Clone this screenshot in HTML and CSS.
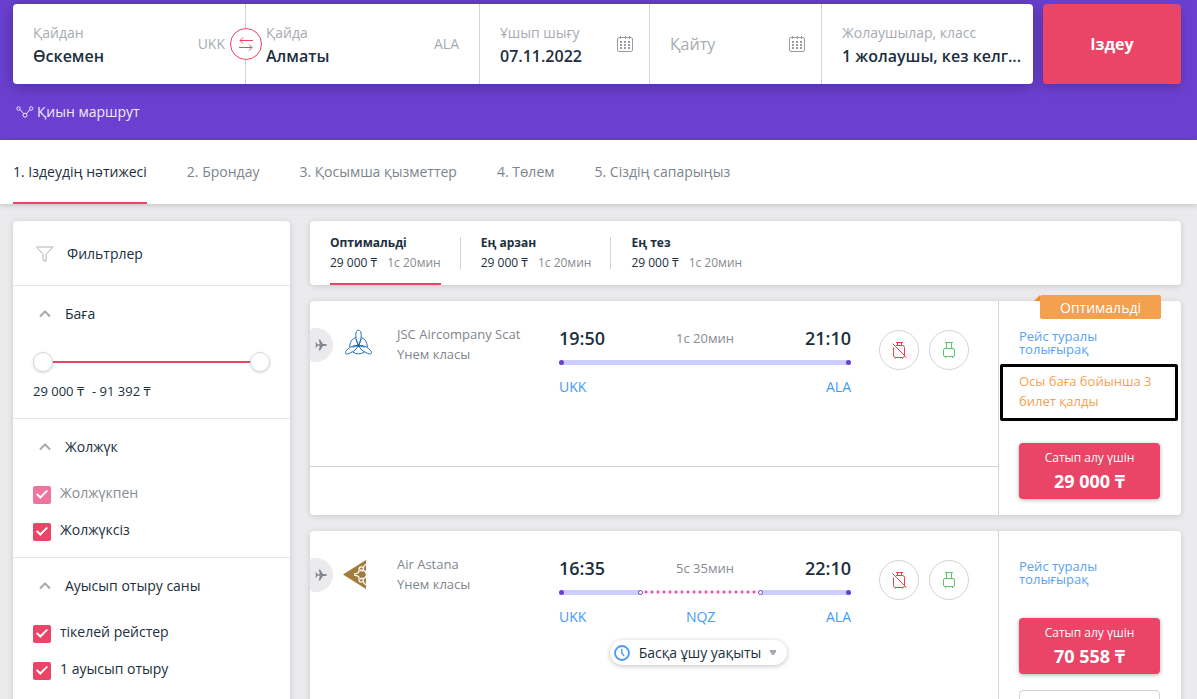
FILE: index.html
```html
<!DOCTYPE html>
<html lang="kk">
<head>
<meta charset="utf-8">
<meta name="viewport" content="width=device-width, initial-scale=1">
<title>Іздеудің нәтижесі</title>
<link rel="stylesheet" href="styles.css">
</head>
<body>
<svg class="sprite" aria-hidden="true">
  <symbol id="calendar" viewBox="0 0 16 16">
    <path d="M2 1.500h12q1.500 0 1.500 1.500v11q0 1.500-1.500 1.500h-12q-1.500 0-1.500-1.500v-11q0-1.500 1.500-1.500zM3.500 0v3M8.500 0v3M12.500 0v3" fill="none" stroke="currentColor"/>
    <path d="M3 5h2v2H3zM7 5h2v2H7zM11 5h2v2h-2zM3 8h2v2H3zM7 8h2v2H7zM11 8h2v2h-2zM3 11h2v2H3zM7 11h2v2H7zM11 11h2v2h-2z" fill="currentColor"/>
  </symbol>
  <symbol id="chevron" viewBox="0 0 12 8"><path d="M1 6.500l5-5 5 5" fill="none" stroke="currentColor" stroke-width="2"/></symbol>
  <symbol id="plane" viewBox="0 0 12 12"><path d="M0.300 3.500h1l1.200 1.700h2.300L3.800 0.500h1.300l2.900 4.600h2.500q1.300 0 1.300.9t-1.300.9H8L5.100 11.500H3.800L4.800 6.800H2.500L1.300 8.500h-1L1 6z" fill="currentColor"/></symbol>
  <symbol id="no-bag" viewBox="0 0 16 18">
    <path d="M5 1.500h7M6.500 2v3M10.500 2v3M5 4.500h6.500q2 0 2 2v8q0 2-2 2H4.500q-2 0-2-2V6.500M4.500 16.500v1M11.500 16.500v1M1.500 2.500l14 14" fill="none" stroke="currentColor"/>
  </symbol>
  <symbol id="bag" viewBox="0 0 16 18">
    <path d="M4 1.500h8M5.500 2v5M10.500 2v5M4 7.500h8q1.500 0 1.500 1.500v5q0 1.500-1.500 1.500H4q-1.500 0-1.500-1.500V9q0-1.500 1.500-1.500zM4.500 16v1M11.500 16v1" fill="none" stroke="currentColor"/>
  </symbol>
</svg>

<div class="page">
  <header class="header">
    <form class="search">
      <div class="search-fields">
        <div class="field field-from">
          <div class="field-main">
            <label for="from">Қайдан</label>
            <input id="from" type="text" value="Өскемен">
          </div>
          <span class="field-code">UKK</span>
          <button class="swap" type="button" aria-label="Ауыстыру">
            <svg width="16" height="16" viewBox="0 0 16 16"><path d="M15 4.500H2M5 1.500l-3 3 3 3M1 11.500h13M11 8.500l3 3-3 3" fill="none" stroke="currentColor"/></svg>
          </button>
        </div>
        <div class="field">
          <div class="field-main">
            <label for="to">Қайда</label>
            <input id="to" type="text" value="Алматы">
          </div>
          <span class="field-code">ALA</span>
        </div>
        <div class="field field-date">
          <div class="field-main">
            <label for="depart">Ұшып шығу</label>
            <input id="depart" type="text" value="07.11.2022">
          </div>
          <svg class="field-icon" width="16" height="16"><use href="#calendar"/></svg>
        </div>
        <div class="field field-date">
          <input type="text" placeholder="Қайту" aria-label="Қайту">
          <svg class="field-icon" width="16" height="16"><use href="#calendar"/></svg>
        </div>
        <div class="field field-people">
          <div class="field-main">
            <span class="field-label" id="people">Жолаушылар, класс</span>
            <button class="people" type="button" aria-describedby="people">1 жолаушы, кез келг...</button>
          </div>
        </div>
      </div>
      <button class="search-button" type="submit">Іздеу</button>
    </form>
    <a class="complex" href="#">
      <svg width="18" height="12" viewBox="0 0 18 12"><g fill="none" stroke="currentColor"><circle cx="2.500" cy="2.500" r="1.700"/><circle cx="15.200" cy="2.500" r="1.700"/><circle cx="9" cy="9.200" r="2"/><path d="M4 3.500l3.500 4M13.800 3.700l-3.400 4"/></g></svg>
      Қиын маршрут
    </a>
  </header>

  <nav class="steps">
    <a class="step step-active" href="#">1. Іздеудің нәтижесі</a>
    <a class="step" href="#">2. Брондау</a>
    <a class="step" href="#">3. Қосымша қызметтер</a>
    <a class="step" href="#">4. Төлем</a>
    <a class="step" href="#">5. Сіздің сапарыңыз</a>
  </nav>

  <div class="content">
    <aside class="filters">
      <h2 class="filters-head">
        <svg width="18" height="17" viewBox="0 0 18 17"><path d="M0.500 1h17M1 1.500l6 7V14l3 1.500V8.500l6.500-7" fill="none" stroke="currentColor"/></svg>
        Фильтрлер
      </h2>
      <section class="group">
        <button class="group-title" type="button"><svg width="12" height="8"><use href="#chevron"/></svg>Баға</button>
        <div class="range">
          <input type="range" min="29000" max="91392" value="29000" aria-label="Ең төмен баға">
          <input type="range" min="29000" max="91392" value="91392" aria-label="Ең жоғары баға">
        </div>
        <p class="range-text"><span>29 000 ₸</span><span>- 91 392 ₸</span></p>
      </section>
      <section class="group">
        <button class="group-title" type="button"><svg width="12" height="8"><use href="#chevron"/></svg>Жолжүк</button>
        <div class="options">
          <label class="option option-muted"><input type="checkbox" checked disabled>Жолжүкпен</label>
          <label class="option"><input type="checkbox" checked>Жолжүксіз</label>
        </div>
      </section>
      <section class="group">
        <button class="group-title" type="button"><svg width="12" height="8"><use href="#chevron"/></svg>Ауысып отыру саны</button>
        <div class="options">
          <label class="option"><input type="checkbox" checked>тікелей рейстер</label>
          <label class="option"><input type="checkbox" checked>1 ауысып отыру</label>
        </div>
      </section>
    </aside>

    <main class="results">
      <div class="sorts">
        <button class="sort sort-active" type="button"><b>Оптимальді</b><span>29 000 ₸ <i>1с 20мин</i></span></button>
        <button class="sort" type="button"><b>Ең арзан</b><span>29 000 ₸ <i>1с 20мин</i></span></button>
        <button class="sort" type="button"><b>Ең тез</b><span>29 000 ₸ <i>1с 20мин</i></span></button>
      </div>

      <article class="card">
        <div class="card-main">
          <div class="segment">
            <span class="chip"><svg width="12" height="12"><use href="#plane"/></svg></span>
            <svg class="logo" width="28" height="28" viewBox="0 0 28 28">
              <g fill="none" stroke="#1f6fb5">
                <path d="M13.500 16.500c-1.500-3-2.700-6-2.700-10s1-5.200 2.700-5.200 2.700 1.200 2.700 5.200-1.200 7-2.700 10z"/>
                <path d="M13.500 16.500c-3.500-.5-7 .6-10.300 3.200C.6 21.800 0 23.700.8 24.500c1 .9 2.400.5 4.700-.7 3.600-1.500 6-3.500 8-7.300z"/>
                <path d="M13.500 16.500c3.500-.5 7 .6 10.300 3.200 2.600 2.100 3.200 4 2.400 4.800-1 .9-2.400.5-4.700-.7-3.600-1.500-6-3.500-8-7.300z"/>
                <path d="M11 8.500C7 9.700 4.800 13 4.700 18M16 8.500c4 1.200 6.200 4.500 6.300 9.500M8 23.200q5.500 3.400 11 0M11 10l2.500 6.500L16 10M13.500 16.500l-6 1.700M13.500 16.500l6 1.700"/>
              </g>
              <circle cx="13.500" cy="16.500" r="1.500" fill="#1f5f9f"/>
            </svg>
            <p class="airline">JSC Aircompany Scat<br>Үнем класы</p>
            <div class="route">
              <div class="times"><strong>19:50</strong><span>1с 20мин</span><strong>21:10</strong></div>
              <div class="bar"><span class="leg leg-first leg-last"></span></div>
              <div class="codes"><a href="#">UKK</a><a href="#">ALA</a></div>
            </div>
            <div class="bags">
              <span class="bag bag-no"><svg width="16" height="18"><use href="#no-bag"/></svg></span>
              <span class="bag bag-yes"><svg width="16" height="18"><use href="#bag"/></svg></span>
            </div>
          </div>
          <div class="card-foot"></div>
        </div>
        <div class="card-side">
          <span class="badge">Оптимальді</span>
          <a class="details" href="#">Рейс туралы толығырақ</a>
          <p class="notice">Осы баға бойынша 3 билет қалды</p>
          <button class="buy" type="button"><span>Сатып алу үшін</span><b>29 000 ₸</b></button>
        </div>
      </article>

      <article class="card">
        <div class="card-main">
          <div class="segment segment-last">
            <span class="chip"><svg width="12" height="12"><use href="#plane"/></svg></span>
            <svg class="logo" width="28" height="30" viewBox="0 0 28 30">
              <path d="M-2 15.500L21 1v29z" fill="#a17c3d"/>
              <g id="curl" fill="none" stroke="#fff" stroke-width="1.300" stroke-linecap="round">
                <path d="M9.500 14.900c3-.4 5-1.500 4.600-3.600-.5-2.300.7-3.600 2.400-3.400 2.400.3 2.500 3.900.3 4-.9 0-1.200-.6-1-1.200"/>
                <path d="M20.800 5.500c-1.600.6-2.300 1.600-2.200 2.900M18.800 11.500c1.200.2 1.800 1.300 2.100 2.500"/>
              </g>
              <use href="#curl" transform="matrix(1 0 0 -1 0 31)"/>
            </svg>
            <p class="airline">Air Astana<br>Үнем класы</p>
            <div class="route">
              <div class="times"><strong>16:35</strong><span>5с 35мин</span><strong>22:10</strong></div>
              <div class="bar bar-stop"><span class="leg leg-first"></span><span class="layover"></span><span class="leg leg-last"></span></div>
              <div class="codes codes-stop"><a href="#">UKK</a><a href="#">NQZ</a><a href="#">ALA</a></div>
              <button class="other" type="button">
                <svg width="16" height="16" viewBox="0 0 16 16"><circle cx="8" cy="8" r="7" fill="none" stroke="#459bf6" stroke-width="1.800"/><path d="M7.800 3.800v4.400l2.400 3" fill="none" stroke="#459bf6" stroke-width="1.300"/></svg>
                Басқа ұшу уақыты
                <svg width="6" height="5" viewBox="0 0 6 5"><path d="M0 0h6v1.500L3.800 5H2.200L0 1.500z" fill="#a3a9b3"/></svg>
              </button>
            </div>
            <div class="bags">
              <span class="bag bag-no"><svg width="16" height="18"><use href="#no-bag"/></svg></span>
              <span class="bag bag-yes"><svg width="16" height="18"><use href="#bag"/></svg></span>
            </div>
          </div>
        </div>
        <div class="card-side">
          <a class="details details-only" href="#">Рейс туралы толығырақ</a>
          <button class="buy" type="button"><span>Сатып алу үшін</span><b>70 558 ₸</b></button>
          <button class="alt" type="button" aria-label="Қосымша"></button>
        </div>
      </article>
    </main>
  </div>
</div>
</body>
</html>
```
FILE: styles.css
```css
*, *::before, *::after { box-sizing: border-box; }

body {
  margin: 0;
  background: #ebebed;
  color: #202f3d;
  font: 14px/20px "Open Sans", "Noto Sans", sans-serif;
}

button, input { font: inherit; color: inherit; }
button { margin: 0; padding: 0; border: 0; background: none; cursor: pointer; }
a { text-decoration: none; }
p, h2 { margin: 0; font-weight: 400; }
svg { display: block; flex: none; }
.sprite { position: absolute; width: 0; height: 0; }

.page { height: 100vh; overflow: hidden; }

/* Search header */
.header {
  height: 140px;
  padding: 4px 16px 0 13px;
  background: #6b40d1;
}
.search { display: flex; gap: 10px; height: 80px; }
.search-fields {
  flex: 1;
  min-width: 0;
  display: grid;
  grid-template-columns: 233fr 234fr 170fr 172fr 211fr;
  border-radius: 4px;
  background: #fff;
  box-shadow: 0 2px 16px rgba(0, 0, 0, .3);
}
.field {
  position: relative;
  display: flex;
  align-items: center;
  min-width: 0;
  padding: 0 20px;
  border-right: 1px solid #d2d3d6;
}
.field-date { padding-right: 16px; }
.field-people { padding-right: 8px; border-right: 0; }
.field-main { flex: 1; min-width: 0; padding-top: 4px; }
.field label, .field-label { display: block; color: #a7abb2; }
.field input {
  display: block;
  width: 100%;
  min-width: 0;
  height: 26px;
  padding: 0;
  border: 0;
  outline: 0;
  background: none;
  font-size: 16px;
  font-weight: 600;
}
.field input::placeholder { color: #a7abb2; font-weight: 400; opacity: 1; }
.field-code { color: #a7abb2; }
.field-icon { color: #9a9da3; }
.people {
  display: block;
  width: 100%;
  height: 26px;
  overflow: hidden;
  text-align: left;
  text-overflow: ellipsis;
  white-space: nowrap;
  font-size: 16px;
  font-weight: 600;
}
.swap {
  position: absolute;
  z-index: 1;
  right: -17px;
  top: 24px;
  display: grid;
  place-items: center;
  width: 32px;
  height: 32px;
  border: 1px solid #ea4466;
  border-radius: 50%;
  background: #fff;
  color: #ea4466;
}
.search-button {
  width: 138px;
  border-radius: 4px;
  background: #ea4466;
  box-shadow: 0 4px 12px rgba(0, 0, 0, .2);
  color: #fff;
  font-size: 16px;
  font-weight: 700;
}
.complex {
  display: inline-flex;
  align-items: center;
  gap: 3px;
  margin: 18px 0 0 3px;
  color: #f0ecfa;
}

/* Booking steps */
.steps {
  display: flex;
  gap: 40px;
  height: 64px;
  padding: 0 13px;
  background: #fff;
  box-shadow: 0 1px 6px rgba(0, 0, 0, .2);
}
.step { color: #7c858e; line-height: 64px; white-space: nowrap; }
.step-active { border-bottom: 2px solid #ea4466; color: #202f3d; }

.content {
  display: grid;
  grid-template-columns: 277px minmax(0, 1fr);
  align-items: start;
  gap: 20px;
  padding: 17px 16px 16px 13px;
}

/* Filters */
.filters, .sorts, .card {
  border-radius: 4px;
  background: #fff;
  box-shadow: 0 1px 6px rgba(0, 0, 0, .15);
}
.filters { padding-bottom: 40px; }
.filters-head {
  display: flex;
  align-items: center;
  gap: 13px;
  height: 64px;
  padding: 2px 23px 0;
  font-size: 14px;
}
.filters-head svg { color: #a9b0b7; }
.group { padding: 17px 20px; border-top: 1px solid #e3e5e8; }
.group-title { display: flex; align-items: center; gap: 14px; padding: 1px 6px; }
.group-title svg { color: #a3a9af; }
.range { position: relative; height: 20px; margin-top: 27px; }
.range::before {
  content: "";
  position: absolute;
  top: 9px;
  left: 10px;
  right: 10px;
  height: 2px;
  background: #ea4466;
}
.range input {
  position: absolute;
  inset: 0;
  width: 100%;
  height: 20px;
  margin: 0;
  appearance: none;
  background: none;
  pointer-events: none;
}
.range input::-webkit-slider-thumb {
  appearance: none;
  width: 20px;
  height: 20px;
  border: 1px solid #d6d8db;
  border-radius: 50%;
  background: #fff;
  box-shadow: 0 1px 3px rgba(0, 0, 0, .15);
  pointer-events: auto;
}
.range-text { display: flex; gap: 8px; margin-top: 9px; font-size: 13px; }
.options { display: grid; gap: 17px; margin-top: 25px; }
.option { display: flex; align-items: center; gap: 9px; height: 20px; }
.option-muted { color: #868c93; }
.option input {
  appearance: none;
  flex: none;
  display: grid;
  place-items: center;
  width: 18px;
  height: 18px;
  margin: 3px 0 0;
  border-radius: 2px;
  background: #ea4466;
}
.option input:disabled { background: #ed769e; }
.option input::after {
  content: "";
  width: 12px;
  height: 9px;
  background: #fff;
  clip-path: polygon(0 50%, 12% 36%, 36% 66%, 88% 0, 100% 12%, 36% 100%);
}

/* Results */
.results { display: grid; gap: 16px; }
.sorts { display: flex; height: 64px; padding: 0 20px; }
.sort {
  position: relative;
  display: flex;
  flex-direction: column;
  align-items: flex-start;
  margin-right: 40px;
  padding-top: 12px;
  font-size: 12px;
  white-space: nowrap;
}
.sort i { margin-left: 7px; color: #868c93; font-style: normal; }
.sort-active { border-bottom: 2px solid #ea4466; }
.sort + .sort::before {
  content: "";
  position: absolute;
  left: -21px;
  top: 16px;
  width: 1px;
  height: 32px;
  background: #d2d3d6;
}

.card { display: grid; grid-template-columns: minmax(0, 1fr) 183px; }
.card-main { display: flex; flex-direction: column; }
.segment {
  flex: 1;
  display: flex;
  align-items: flex-start;
  padding: 23px 29px 0 0;
  border-bottom: 1px solid #d2d3d6;
}
.segment-last { border-bottom: 0; }
.card-foot { height: 48px; }
.chip {
  flex: none;
  display: grid;
  place-items: center;
  width: 23px;
  height: 34px;
  margin-top: 4px;
  padding-right: 1px;
  border-radius: 4px 17px 17px 4px;
  background: #ebebed;
  color: #7f8790;
}
.logo { margin: 5px 24px 0 12px; overflow: visible; }
.airline { flex: none; width: 162px; color: #7f868d; font-size: 13px; }
.route { flex: 1; min-width: 0; display: flex; flex-direction: column; margin-top: 2px; }
.times {
  display: flex;
  align-items: center;
  justify-content: space-between;
  line-height: 24px;
}
.times strong { font-size: 18px; font-weight: 600; }
.times span { color: #868c93; font-size: 13px; }
.bar { display: grid; margin-top: 10px; }
.bar-stop, .codes-stop { display: grid; grid-template-columns: 28fr 41fr 31fr; }
.leg { display: flex; height: 5px; border-radius: 3px; background: #cdcdfe; }
.leg-first::before, .leg-last::after {
  content: "";
  width: 5px;
  height: 5px;
  border-radius: 50%;
  background: #6b40d1;
}
.leg-last::after { margin-left: auto; }
.layover {
  z-index: 1;
  display: flex;
  justify-content: space-between;
  height: 5px;
  margin: 0 -3px;
  background: radial-gradient(circle at 3px 2px, #ea4fb0 1px, transparent 2px) 5px 0 / 6px 5px repeat-x;
}
.layover::before, .layover::after {
  content: "";
  width: 5px;
  height: 5px;
  border: 1px solid #6b40d1;
  border-radius: 50%;
  background: #fff;
}
.codes { display: flex; justify-content: space-between; margin-top: 12px; }
.codes-stop { display: grid; }
.codes a { color: #459bf6; }
.codes-stop a { text-align: center; }
.codes-stop a:first-child { text-align: left; }
.codes-stop a:last-child { text-align: right; }
.other {
  display: flex;
  align-items: center;
  align-self: center;
  gap: 9px;
  height: 25px;
  margin: 13px 13px 0 0;
  padding: 0 11px 0 4px;
  border-radius: 13px;
  box-shadow: 0 1px 5px rgba(0, 0, 0, .25);
  white-space: nowrap;
}
.bags { display: flex; gap: 10px; margin: 6px 0 0 28px; }
.bag {
  display: grid;
  place-items: center;
  width: 40px;
  height: 40px;
  border: 1px solid #d2d3d6;
  border-radius: 50%;
}
.bag-no { color: #e5414b; }
.bag-yes { color: #5cc768; }

.card-side {
  position: relative;
  display: flex;
  flex-direction: column;
  padding: 29px 21px 16px 20px;
  border-left: 1px solid #d2d3d6;
}
.badge {
  position: absolute;
  top: -6px;
  right: 20px;
  width: 121px;
  height: 24px;
  border-radius: 2px;
  background: #f3a04f;
  color: #fff;
  line-height: 26px;
  text-align: center;
}
.badge::before {
  content: "";
  position: absolute;
  left: -6px;
  top: 0;
  width: 6px;
  height: 6px;
  background: #ef8c2c;
  clip-path: polygon(100% 0, 100% 100%, 0 100%);
}
.details { color: #5aa2f5; font-size: 13px; line-height: 13px; }
.details-only { margin-bottom: 32px; }
.notice {
  margin: 8px -18px 22px -19px;
  padding: 4px 15px 7px 16px;
  border: 3px solid #000;
  border-radius: 2px;
  color: #f3a255;
  font-size: 13px;
}
.buy {
  display: flex;
  flex-direction: column;
  align-items: center;
  height: 56px;
  padding-top: 5px;
  border-radius: 4px;
  background: #ea4466;
  box-shadow: 0 1px 4px rgba(0, 0, 0, .3);
  color: #fff;
}
.buy span { font-size: 12px; }
.buy b { font-size: 18px; line-height: 26px; }
.alt { height: 40px; margin-top: 16px; border: 1px solid #d2d3d6; border-radius: 4px; }
```
